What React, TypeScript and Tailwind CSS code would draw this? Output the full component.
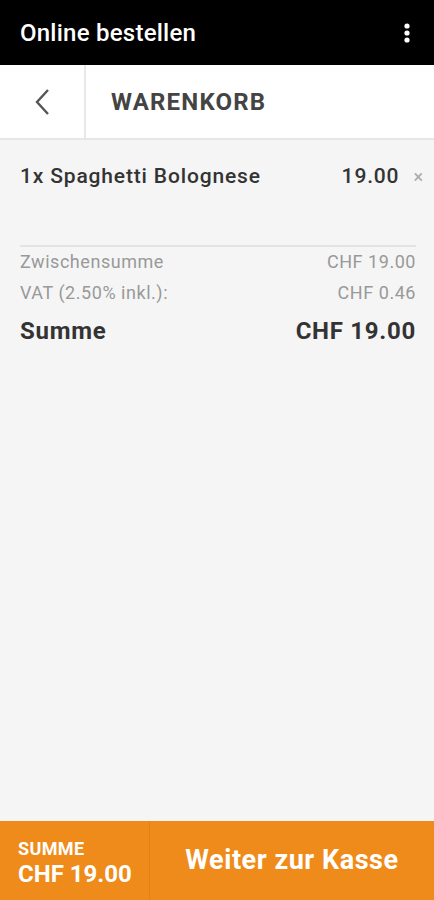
import React from "react";

const App = () => {
  return (
    <div className="flex h-[900px] w-full flex-col bg-[#f5f5f5] font-['Roboto',sans-serif]">
      <div className="flex h-[65px] items-center justify-between bg-black pl-5 pr-[23px]">
        <h1 className="text-[24px] font-medium tracking-[0.01em] text-white">Online bestellen</h1>
        <svg width="8" height="22" viewBox="0 0 8 22" fill="#fff">
          <circle cx="4" cy="4" r="2.6" />
          <circle cx="4" cy="11" r="2.6" />
          <circle cx="4" cy="18" r="2.6" />
        </svg>
      </div>

      <div className="flex h-[75px] border-b-2 border-[#e6e6e6] bg-white">
        <button className="flex w-[86px] items-center justify-center border-r-2 border-[#e8e8e8]">
          <svg width="18" height="28" viewBox="0 0 18 28" fill="none" stroke="#555" strokeWidth="2.4">
            <path d="M15 2 L4 14 L15 26" />
          </svg>
        </button>
        <div className="flex items-center pl-[25px]">
          <h2 className="text-[24px] font-bold tracking-[0.05em] text-[#444]">WARENKORB</h2>
        </div>
      </div>

      <div className="flex-1 pl-5 pr-[18px]">
        <div className="flex items-center pt-[21px]">
          <span className="flex-1 text-[21px] font-medium tracking-[0.04em] text-[#333]">1x Spaghetti Bolognese</span>
          <span className="text-[21px] font-medium tracking-[0.04em] text-[#333]">19.00</span>
          <span className="ml-[14px] mr-[-7px] text-[18px] text-[#aaa]">×</span>
        </div>

        <div className="mt-[52px] border-t-2 border-[#e3e3e3]" />

        <div className="mt-[1px] flex justify-between text-[18px] tracking-[0.03em] text-[#999]">
          <span>Zwischensumme</span>
          <span>CHF 19.00</span>
        </div>
        <div className="mt-[4px] flex justify-between text-[18px] tracking-[0.03em] text-[#999]">
          <span>VAT (2.50% inkl.):</span>
          <span>CHF 0.46</span>
        </div>
        <div className="mt-[7px] flex justify-between text-[24px] font-bold tracking-[0.03em] text-[#333]">
          <span>Summe</span>
          <span>CHF 19.00</span>
        </div>
      </div>

      <div className="flex h-[79px] bg-[#ef8b1a] text-white">
        <div className="flex w-[150px] flex-col justify-center border-r border-[#e2821a] pl-[18px] pt-[4px]">
          <span className="text-[18px] leading-[22px] font-bold tracking-[0.02em]">SUMME</span>
          <span className="text-[24px] leading-[28px] font-bold">CHF 19.00</span>
        </div>
        <button className="flex flex-1 items-center justify-center text-[27px] font-bold tracking-[0.02em]">
          Weiter zur Kasse
        </button>
      </div>
    </div>
  );
};

export default App;
